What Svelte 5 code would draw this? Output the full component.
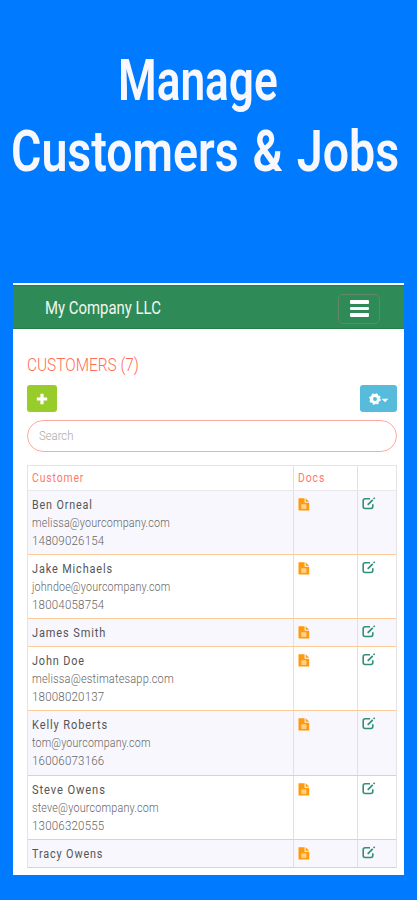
<script>
  const customers = [
    { name: 'Ben Orneal', w: 61, email: 'melissa@yourcompany.com', ew: 138, phone: '14809026154' },
    { name: 'Jake Michaels', w: 81, email: 'johndoe@yourcompany.com', ew: 138, phone: '18004058754' },
    { name: 'James Smith', w: 74, h: 28 },
    { name: 'John Doe', w: 53, email: 'melissa@estimatesapp.com', ew: 142, phone: '18008020137' },
    { name: 'Kelly Roberts', w: 76, email: 'tom@yourcompany.com', ew: 119, phone: '16006073166', h: 65 },
    { name: 'Steve Owens', w: 74, email: 'steve@yourcompany.com', ew: 127, phone: '13006320555' },
    { name: 'Tracy Owens', w: 71, h: 28 }
  ];

  // Condenses a line of text horizontally to the given width.
  function fit(node, width) {
    const apply = () => {
      node.style.transform = `scaleX(${width / node.offsetWidth})`;
    };
    apply();
    document.fonts?.ready.then(apply);
  }
</script>

<main>
  <h1>
    <span class="line first"><span class="t" use:fit={160}>Manage</span></span>
    <span class="line second"><span class="t" use:fit={388}>Customers &amp; Jobs</span></span>
  </h1>

  <section class="card">
    <header>
      <span class="brand"><span class="t" use:fit={116}>My Company LLC</span></span>
      <button class="menu" aria-label="Menu"><i></i><i></i><i></i></button>
    </header>

    <div class="content">
      <h2><span class="t" use:fit={112}>CUSTOMERS (7)</span></h2>
      <div class="actions">
        <button class="add" aria-label="Add">
          <svg width="12" height="12" viewBox="0 0 12 12"><path d="M6 .8v10.4M.8 6h10.4" stroke="#fff" stroke-width="3.2" /></svg>
        </button>
        <button class="settings" aria-label="Settings">
          <svg width="20" height="12" viewBox="0 0 20 12">
            <circle cx="6" cy="6" r="3.5" fill="none" stroke="#fff" stroke-width="3" />
            <circle cx="6" cy="6" r="5.1" fill="none" stroke="#fff" stroke-width="1.4" stroke-dasharray="2.1 1.905" />
            <path d="M12.6 5.8h6.8L16 9.2z" fill="#fff" />
          </svg>
        </button>
      </div>
      <div class="search"><span class="t" use:fit={34}>Search</span></div>

      <div class="table">
        <div class="row head">
          <div><span class="t" use:fit={52}>Customer</span></div>
          <div><span class="t" use:fit={27}>Docs</span></div>
          <div></div>
        </div>
        {#each customers as c, i}
          <div class="row" class:odd={i % 2 === 0} style:height="{c.h ?? 64}px">
            <div>
              <p class="name"><span class="t" use:fit={c.w}>{c.name}</span></p>
              {#if c.email}
                <p><span class="t" use:fit={c.ew}>{c.email}</span></p>
                <p><span class="t" use:fit={72}>{c.phone}</span></p>
              {/if}
            </div>
            <div>
              <svg class="doc" width="12" height="13" viewBox="0 0 12 13">
                <path d="M.5.3h6.1v4.4h4.6v7.9H.5z" fill="#ff9a0c" />
                <path d="M7.6.3l3.6 3.5H7.6z" fill="#ff9a0c" />
                <path d="M3.4 6.4h4.9v4.3H3.4z" fill="#ffe3b8" />
                <path d="M3.4 7.8h4.9M3.4 9.4h4.9" stroke="#ffb648" stroke-width=".6" />
              </svg>
            </div>
            <div>
              <svg class="edit" width="14" height="13" viewBox="0 0 14 13" fill="none" stroke="#318f78">
                <path d="M8 1.7H3.2Q1.2 1.7 1.2 3.7v5.8q0 2 2 2h5.6q2 0 2-2V7.2" stroke-width="1.6" />
                <path d="M5.7 7.8l5-5" stroke-width="1.7" />
                <path d="M11.5 1.9l1.2-1.2" stroke-width="1.6" />
              </svg>
            </div>
          </div>
        {/each}
      </div>
    </div>
  </section>
</main>

<style>
  :global(body) { margin: 0; background: #007bff; }
  main {
    box-sizing: border-box; width: 417px; height: 900px; overflow: hidden;
    background: #007bff; font-family: Roboto, "Liberation Sans", sans-serif;
    padding-top: 45px;
  }
  h1, h2, p { margin: 0; font-weight: 400; }
  button { border: 0; padding: 0; display: flex; align-items: center; justify-content: center; }
  .t { display: inline-block; white-space: nowrap; transform-origin: 0 50%; }
  h1 { height: 238px; color: #f7f7fd; font-size: 58px; line-height: 70px; font-weight: 600; }
  .line { display: block; height: 70px; }
  .first { padding-left: 118px; }
  .second { padding-left: 10.5px; padding-top: 1px; word-spacing: 3px; }
  .card { box-sizing: border-box; width: 391px; height: 591.5px; margin-left: 13.3px; background: #fff; padding-top: 2px; }
  header {
    box-sizing: border-box; height: 44px; background: #2e8b57; border-top: 1px solid #237e48; border-bottom: 1px solid #237e48;
    display: flex; align-items: center; justify-content: space-between; padding: 0 24px 0 32px;
  }
  .brand { color: #f2f6ee; font-size: 18px; line-height: 42px; width: 116px; padding-top: 2px; }
  .menu {
    box-sizing: border-box; width: 42px; height: 30px; margin-top: 3px; border: 1px solid #648668; border-radius: 5px;
    background: none; flex-direction: column; gap: 3px;
  }
  .menu i { width: 19px; height: 3.4px; border-radius: 1px; background: #fff; }
  .content { padding: 24px 7.2px 0 13.7px; }
  h2 { height: 32px; color: #ff6d58; font-size: 18.3px; line-height: 23px; font-weight: 300; }
  .actions { display: flex; justify-content: space-between; height: 27px; }
  .add { width: 30px; height: 27px; background: #98cc2b; border-radius: 3px; }
  .settings { width: 37px; height: 27px; background: #57bbdc; border-radius: 3px; }
  .search {
    box-sizing: border-box; height: 32px; margin-top: 8px; border: 1.3px solid #ffaaa0; border-radius: 16px;
    padding-left: 11px; font-size: 12px; line-height: 30px; color: #aaa; font-weight: 300;
  }
  .table { box-sizing: border-box; margin-top: 13px; width: 370px; border: 1px solid #e4e4e8; border-bottom: 0; }
  .row { box-sizing: border-box; display: grid; grid-template-columns: 265px 64px 1fr; border-bottom: 1px solid #fccb98; }
  .row > div { padding: 5px 0 0 4px; border-left: 1px solid #e0e0e6; }
  .row > div:first-child { border-left: 0; }
  .row.head { height: 25px; border-bottom-color: #e8e8ec; font-size: 12px; line-height: 17px; color: #ff7968; letter-spacing: 1px; }
  .row.head > div { padding-top: 4px; }
  .odd { background: #f7f7fd; }
  p { height: 18px; font-size: 12px; line-height: 18px; color: #666; font-weight: 300; letter-spacing: .2px; }
  .name { color: #555; font-weight: 400; font-size: 12.5px; letter-spacing: 1px; }
  .doc, .edit { display: block; margin-top: 2px; }
  .edit { margin-top: 1px; }
</style>
